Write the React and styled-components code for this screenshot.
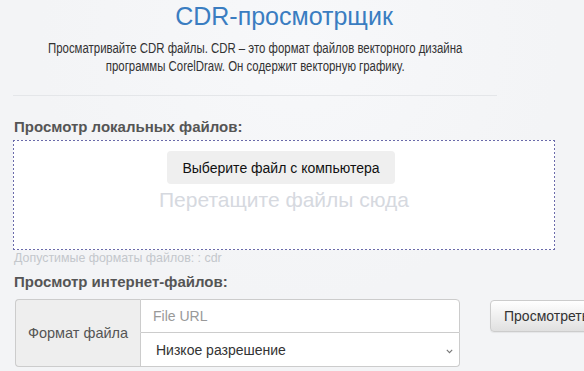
import React from 'react'
import styled, { createGlobalStyle } from 'styled-components'

const GlobalStyle = createGlobalStyle`
  html, body {
    margin: 0;
    padding: 0;
    background: #f4f5f7;
    overflow: hidden;
  }
  body {
    font-family: "Liberation Sans", Arial, sans-serif;
    color: #333;
  }
`

const Page = styled.div`
  width: 584px;
  height: 371px;
  overflow: hidden;
  background: radial-gradient(circle at 300px 40px, #f7f8fa 0, #f3f4f6 260px);
`

const Title = styled.h1`
  width: 568px;
  margin: 0;
  padding-top: 1px;
  text-align: center;
  font-size: 25px;
  line-height: 30px;
  font-weight: normal;
  color: #3a7dc1;
`

const Intro = styled.div`
  width: 484px;
  margin-left: 13px;
`

const Lead = styled.div`
  margin-top: 8px;
  display: flex;
  justify-content: center;
`

// narrow face of the original site, squeezed from Arial metrics
const LeadText = styled.p`
  margin: 0;
  white-space: nowrap;
  text-align: center;
  font-size: 14px;
  line-height: 18px;
  color: #333;
  transform: scaleX(0.815);
`

const Divider = styled.hr`
  margin: 20px 0 0;
  border: 0;
  border-top: 1px solid #e4e6e9;
`

const Section = styled.div`
  padding-left: 13px;
`

const SectionTitle = styled.h2`
  margin: ${p => p.$top}px 0 ${p => p.$bottom}px 1px;
  font-size: 15px;
  line-height: 20px;
  font-weight: bold;
  color: #555;
`

const dots = (dir, size) =>
  `repeating-linear-gradient(${dir}, #6b6bab 0 2px, transparent 2px 4px) ${size}`

const DropZone = styled.div`
  width: 542px;
  height: 110px;
  box-sizing: border-box;
  padding-top: 11px;
  display: flex;
  flex-direction: column;
  align-items: center;
  background:
    ${dots('90deg', 'left top / 100% 1px no-repeat')},
    ${dots('90deg', 'left bottom / 100% 1px no-repeat')},
    ${dots('180deg', 'left top / 1px 100% no-repeat')},
    ${dots('180deg', 'right top / 1px 100% no-repeat')},
    #fff;
`

const ChooseButton = styled.button`
  height: 33px;
  margin-right: 6px;
  padding: 0 15px;
  border: 0;
  border-radius: 4px;
  background: #efefef;
  font-family: inherit;
  font-size: 14px;
  color: #111;
`

const DropHint = styled.div`
  margin-top: 4px;
  font-size: 21px;
  line-height: 24px;
  color: #d6d9df;
`

const Formats = styled.div`
  margin-left: 1px;
  font-size: 12.4px;
  line-height: 16px;
  color: #c3c7cc;
`

const UrlRow = styled.div`
  display: flex;
  align-items: flex-start;
  gap: 30px;
  margin-left: 2px;
`

const InputGroup = styled.div`
  display: flex;
  width: 445px;
  flex-shrink: 0;
`

const Addon = styled.div`
  width: 125px;
  box-sizing: border-box;
  display: flex;
  align-items: center;
  justify-content: center;
  background: #eee;
  border: 1px solid #ccc;
  border-right: 0;
  border-radius: 4px 0 0 4px;
  font-size: 14.5px;
  color: #555;
`

const Fields = styled.div`
  flex: 1;
  display: flex;
  flex-direction: column;
`

const UrlInput = styled.input`
  height: 34px;
  box-sizing: border-box;
  padding: 0 12px;
  border: 1px solid #ccc;
  border-radius: 0 4px 0 0;
  background: #fff;
  font-family: inherit;
  font-size: 14px;
  color: #555;
  outline: none;
  &::placeholder {
    color: #999;
  }
`

const SelectWrap = styled.div`
  position: relative;
  height: 34px;
`

const Select = styled.select`
  width: 100%;
  height: 34px;
  box-sizing: border-box;
  padding: 0 12px 0 15px;
  border: 1px solid #ccc;
  border-top: 0;
  border-radius: 0 0 4px 0;
  background: #fff;
  appearance: none;
  font-family: inherit;
  font-size: 14px;
  color: #333;
  outline: none;
`

const Chevron = styled.svg`
  position: absolute;
  right: 7px;
  top: 16px;
  pointer-events: none;
`

const ViewButton = styled.button`
  margin-top: 1px;
  height: 32px;
  padding: 0 12px 0 13px;
  border: 1px solid #ccc;
  border-radius: 4px;
  background: linear-gradient(#fff, #e0e0e0);
  box-shadow: 0 1px 1px rgba(0, 0, 0, 0.06);
  font-family: inherit;
  font-size: 14px;
  color: #333;
  white-space: nowrap;
`

export default function App() {
  return (
    <Page>
      <GlobalStyle />
      <Title>CDR-просмотрщик</Title>
      <Intro>
        <Lead>
          <LeadText>
            Просматривайте CDR файлы. CDR – это формат файлов векторного дизайна
            <br />
            программы CorelDraw. Он содержит векторную графику.
          </LeadText>
        </Lead>
        <Divider />
      </Intro>
      <Section>
        <SectionTitle $top={21} $bottom={3}>Просмотр локальных файлов:</SectionTitle>
        <DropZone>
          <ChooseButton>Выберите файл с компьютера</ChooseButton>
          <DropHint>Перетащите файлы сюда</DropHint>
        </DropZone>
        <Formats>Допустимые форматы файлов: : cdr</Formats>
        <SectionTitle $top={6} $bottom={7}>Просмотр интернет-файлов:</SectionTitle>
        <UrlRow>
          <InputGroup>
            <Addon>Формат файла</Addon>
            <Fields>
              <UrlInput placeholder="File URL" />
              <SelectWrap>
                <Select defaultValue="low">
                  <option value="low">Низкое разрешение</option>
                  <option value="high">Высокое разрешение</option>
                </Select>
                <Chevron width="7" height="5" viewBox="0 0 7 5">
                  <path d="M0.8 0.8L3.5 3.6L6.2 0.8" fill="none" stroke="#777" strokeWidth="1.1" />
                </Chevron>
              </SelectWrap>
            </Fields>
          </InputGroup>
          <ViewButton>Просмотреть</ViewButton>
        </UrlRow>
      </Section>
    </Page>
  )
}
